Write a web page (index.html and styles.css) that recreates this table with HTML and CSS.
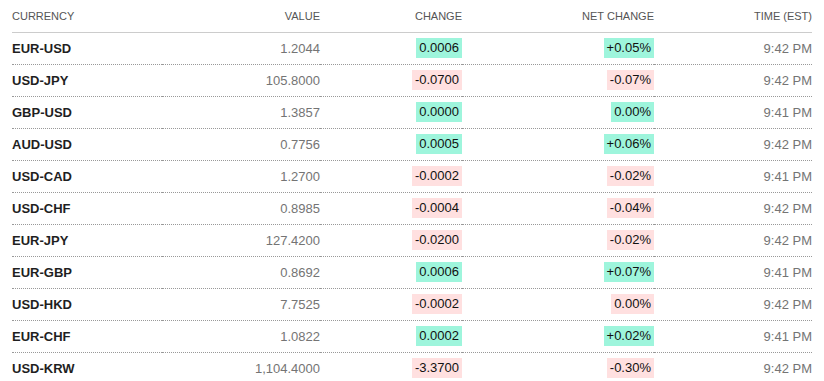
FILE: index.html
```html
<!DOCTYPE html>
<html lang="en">

<head>
    <meta charset="UTF-8">
    <meta name="viewport" content="width=device-width, initial-scale=1.0">
    <title>Currencies</title>
    <link rel="stylesheet" href="styles.css">
</head>

<body>
    <table class="quote-table">
        <colgroup>
            <col class="col-currency">
            <col class="col-value">
            <col class="col-change">
            <col class="col-net">
            <col class="col-time">
        </colgroup>
        <thead>
            <tr>
                <th class="left">CURRENCY</th>
                <th>VALUE</th>
                <th>CHANGE</th>
                <th>NET CHANGE</th>
                <th>TIME (EST)</th>
            </tr>
        </thead>
        <tbody>
            <tr>
                <td class="symbol">EUR-USD</td>
                <td class="value">1.2044</td>
                <td><span class="badge up">0.0006</span></td>
                <td><span class="badge up">+0.05%</span></td>
                <td class="time">9:42 PM</td>
            </tr>
            <tr>
                <td class="symbol">USD-JPY</td>
                <td class="value">105.8000</td>
                <td><span class="badge down">-0.0700</span></td>
                <td><span class="badge down">-0.07%</span></td>
                <td class="time">9:42 PM</td>
            </tr>
            <tr>
                <td class="symbol">GBP-USD</td>
                <td class="value">1.3857</td>
                <td><span class="badge up">0.0000</span></td>
                <td><span class="badge up">0.00%</span></td>
                <td class="time">9:41 PM</td>
            </tr>
            <tr>
                <td class="symbol">AUD-USD</td>
                <td class="value">0.7756</td>
                <td><span class="badge up">0.0005</span></td>
                <td><span class="badge up">+0.06%</span></td>
                <td class="time">9:42 PM</td>
            </tr>
            <tr>
                <td class="symbol">USD-CAD</td>
                <td class="value">1.2700</td>
                <td><span class="badge down">-0.0002</span></td>
                <td><span class="badge down">-0.02%</span></td>
                <td class="time">9:41 PM</td>
            </tr>
            <tr>
                <td class="symbol">USD-CHF</td>
                <td class="value">0.8985</td>
                <td><span class="badge down">-0.0004</span></td>
                <td><span class="badge down">-0.04%</span></td>
                <td class="time">9:42 PM</td>
            </tr>
            <tr>
                <td class="symbol">EUR-JPY</td>
                <td class="value">127.4200</td>
                <td><span class="badge down">-0.0200</span></td>
                <td><span class="badge down">-0.02%</span></td>
                <td class="time">9:42 PM</td>
            </tr>
            <tr>
                <td class="symbol">EUR-GBP</td>
                <td class="value">0.8692</td>
                <td><span class="badge up">0.0006</span></td>
                <td><span class="badge up">+0.07%</span></td>
                <td class="time">9:41 PM</td>
            </tr>
            <tr>
                <td class="symbol">USD-HKD</td>
                <td class="value">7.7525</td>
                <td><span class="badge down">-0.0002</span></td>
                <td><span class="badge down">0.00%</span></td>
                <td class="time">9:42 PM</td>
            </tr>
            <tr>
                <td class="symbol">EUR-CHF</td>
                <td class="value">1.0822</td>
                <td><span class="badge up">0.0002</span></td>
                <td><span class="badge up">+0.02%</span></td>
                <td class="time">9:41 PM</td>
            </tr>
            <tr>
                <td class="symbol">USD-KRW</td>
                <td class="value">1,104.4000</td>
                <td><span class="badge down">-3.3700</span></td>
                <td><span class="badge down">-0.30%</span></td>
                <td class="time">9:42 PM</td>
            </tr>
        </tbody>
    </table>
</body>

</html>
```

FILE: styles.css
```css
:root {
    --up-color: #9ef5dc;
    --down-color: #ffe0e0;
    --text-dark: #1f1f1f;
    --text-muted: #747474;
}

* {
    margin: 0;
    padding: 0;
    box-sizing: border-box;
}

body {
    font-family: "Liberation Sans", Arial, sans-serif;
    background-color: #ffffff;
    padding: 0 12px;
    overflow: hidden;
}

.quote-table {
    width: 800px;
    border-collapse: collapse;
    table-layout: fixed;
}

.col-currency {
    width: 150px;
}

.col-value {
    width: 158px;
}

.col-change {
    width: 142px;
}

.col-net {
    width: 192px;
}

.col-time {
    width: 158px;
}

.quote-table th {
    height: 32px;
    font-size: 11px;
    font-weight: normal;
    color: #555555;
    text-align: right;
    vertical-align: middle;
    border-bottom: 1px solid #cccccc;
}

.quote-table th.left {
    text-align: left;
}

.quote-table td {
    height: 32px;
    font-size: 13px;
    text-align: right;
    vertical-align: middle;
    color: var(--text-dark);
    border-bottom: 1px dotted #999999;
}

.quote-table tbody tr:last-child td {
    border-bottom: none;
}

.quote-table td.symbol {
    text-align: left;
    font-weight: bold;
    color: var(--text-dark);
}

.quote-table td.value,
.quote-table td.time {
    color: var(--text-muted);
}

.badge {
    display: inline-block;
    height: 20px;
    line-height: 20px;
    padding: 0 3px;
    color: #111111;
}

.badge.up {
    background-color: var(--up-color);
}

.badge.down {
    background-color: var(--down-color);
}
```
